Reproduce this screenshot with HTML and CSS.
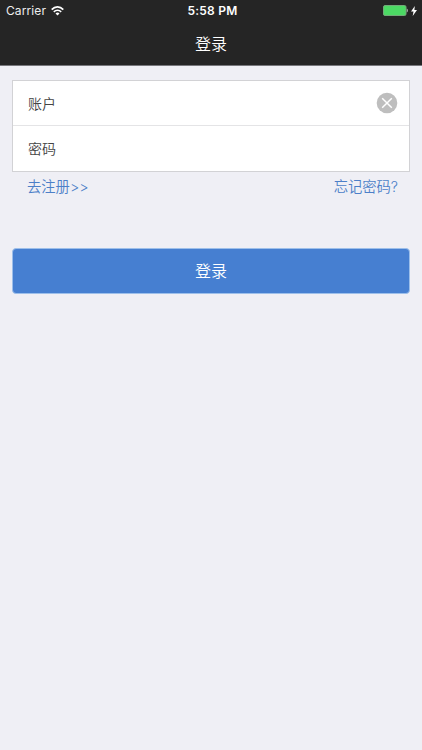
FILE: index.html
```html
<!DOCTYPE html>
<html lang="zh-CN">
<head>
<meta charset="utf-8">
<title>登录</title>
<link rel="stylesheet" href="styles.css">
</head>
<body>
<header class="top">
  <div class="status">
    <div class="carrier"><span>Carrier</span>
      <svg class="wifi" width="13" height="10" viewBox="0 0 13 10"><g fill="none" stroke="#fff" stroke-width="1.6"><path d="M.7 3.6C4-.1 9-.1 12.3 3.6"/><path d="M2.8 5.9C5 3.6 8 3.6 10.2 5.9"/></g><path fill="#fff" d="M4.5 7.4Q6.5 5.8 8.5 7.4L6.5 9.5Z"/></svg>
    </div>
    <time class="clock">5:58 PM</time>
    <div class="power">
      <svg width="25" height="11" viewBox="0 0 25 11"><rect x=".5" y=".5" width="22.5" height="10" rx="1.5" fill="#4cd964" stroke="#72a978"/><path fill="#a5aaa6" d="M23.7 3.6q1.3.3 1.3 1.9t-1.3 1.9z"/></svg>
      <svg width="6" height="10" viewBox="0 0 6 10"><path fill="#fff" d="M3.8 0 0 5.6h2.5L1.7 10 6 4H3.4z"/></svg>
    </div>
  </div>
  <h1 class="title">登录</h1>
</header>
<main class="content">
  <div class="fields">
    <div class="field"><span>账户</span>
      <svg width="22" height="22" viewBox="0 0 22 22"><circle cx="11" cy="11" r="10.3" fill="#bebebe"/><path d="M6.2 6.2l9.6 9.6M15.8 6.2l-9.6 9.6" stroke="#fff" stroke-width="1.5"/></svg>
    </div>
    <div class="field"><span>密码</span></div>
  </div>
  <nav class="links"><a>去注册&gt;&gt;</a><a>忘记密码?</a></nav>
  <button class="submit">登录</button>
</main>
</body>
</html>
```
FILE: styles.css
```css
* { box-sizing: border-box; }
body {
  margin: 0;
  height: 750px;
  overflow: hidden;
  background: #efeff5;
  font-family: Inter, "Noto Sans CJK SC", sans-serif;
}
.top {
  height: 66px;
  background: #252525;
  border-bottom: 1px solid #77777c;
  color: #fff;
}
.status {
  display: grid;
  grid-template-columns: 1fr auto 1fr;
  align-items: center;
  height: 22px;
  padding: 0 5px 0 6px;
  font-size: 12px;
}
.carrier, .power { display: flex; align-items: center; }
.carrier { gap: 5px; padding-bottom: 1px; color: #eee; letter-spacing: .1px; }
.power { justify-content: flex-end; gap: 3px; padding-bottom: 1px; }
.clock { padding: 0 0 1px 2px; font-weight: 600; letter-spacing: .2px; }
.title {
  margin: 0;
  height: 44px;
  text-align: center;
  font: 350 16px/43px "Noto Sans CJK SC", sans-serif;
}
.content { padding: 14px 12px 0; }
.fields {
  height: 92px;
  background: #fff;
  border: 1px solid #d2d2d5;
}
.field {
  display: flex;
  align-items: center;
  justify-content: space-between;
  height: 44px;
  padding: 0 11px 0 15px;
  color: #444;
  font: 350 14px "Noto Sans CJK SC", sans-serif;
}
.field + .field {
  height: 46px;
  padding-bottom: 1px;
  border-top: 1px solid #e4e4e6;
}
.links {
  display: flex;
  justify-content: space-between;
  height: 76px;
  padding: 0 12px 0 15px;
  color: #4c7fc8;
  font: 350 14.3px/30px Inter, "Noto Sans CJK SC", sans-serif;
}
.submit {
  display: block;
  width: 100%;
  height: 46px;
  padding: 0 0 1px;
  border: 1px solid #9dbfea;
  border-radius: 4px;
  background: #467fd1;
  color: #fff;
  font: 350 16px/43px "Noto Sans CJK SC", sans-serif;
}
```
